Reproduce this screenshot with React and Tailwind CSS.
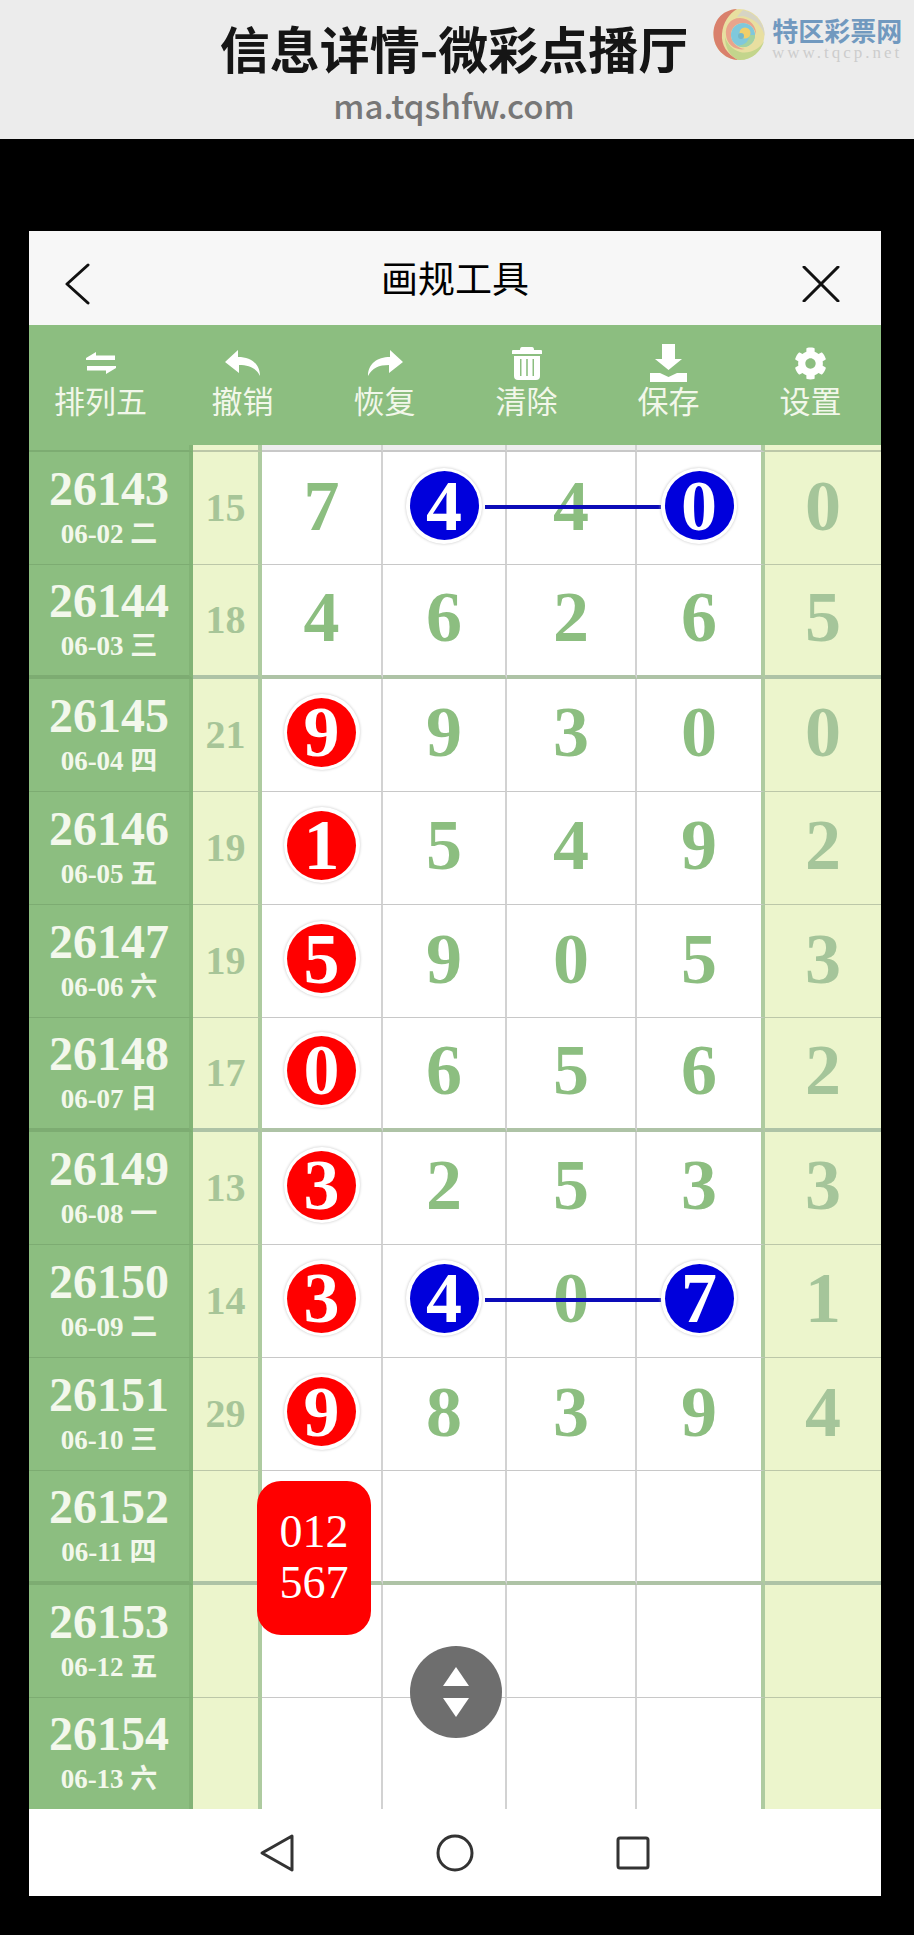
import { FaCog } from "react-icons/fa";

const serif = "font-['Liberation_Serif',serif]";
const cjk = "font-['Noto_Sans_CJK_SC','Noto_Sans',sans-serif]";
const cols = "grid grid-cols-[164px_69px_121px_124px_130px_128px_116px]";

// r / b mark the red and blue balls
const rows = [
  { id: 26143, date: "06-02 二", sum: 15, nums: ["7", "b4", "4", "b0"], last: 0, link: true },
  { id: 26144, date: "06-03 三", sum: 18, nums: ["4", "6", "2", "6"], last: 5, thick: true },
  { id: 26145, date: "06-04 四", sum: 21, nums: ["r9", "9", "3", "0"], last: 0 },
  { id: 26146, date: "06-05 五", sum: 19, nums: ["r1", "5", "4", "9"], last: 2 },
  { id: 26147, date: "06-06 六", sum: 19, nums: ["r5", "9", "0", "5"], last: 3 },
  { id: 26148, date: "06-07 日", sum: 17, nums: ["r0", "6", "5", "6"], last: 2, thick: true },
  { id: 26149, date: "06-08 一", sum: 13, nums: ["r3", "2", "5", "3"], last: 3 },
  { id: 26150, date: "06-09 二", sum: 14, nums: ["r3", "b4", "0", "b7"], last: 1, link: true },
  { id: 26151, date: "06-10 三", sum: 29, nums: ["r9", "8", "3", "9"], last: 4 },
  { id: 26152, date: "06-11 四", nums: ["", "", "", ""], thick: true },
  { id: 26153, date: "06-12 五", nums: ["", "", "", ""] },
  { id: 26154, date: "06-13 六", nums: ["", "", "", ""], end: true },
];

function Ball({ value }) {
  const color = value[0] === "r" ? "bg-[#ff0000]" : "bg-[#0000dc]";
  return (
    <div className="relative z-10 w-[76px] h-[76px] rounded-full bg-white shadow-[0_0_3px_#c4c4c4] flex items-center justify-center">
      <div className={`w-[69px] h-[69px] rounded-full ${color} flex items-center justify-center text-white text-[72px] leading-none font-bold`}>
        {value[1]}
      </div>
    </div>
  );
}

function SwapIcon() {
  return (
    <svg width="30" height="22" viewBox="0 0 30 22" fill="white">
      <path d="M0 6 L10 0 L10 3.5 L29 3.5 L29 8 L0 8 Z" />
      <path d="M30 16 L20 22 L20 18.5 L1 18.5 L1 14 L30 14 Z" />
    </svg>
  );
}

function ReplyIcon({ flip }) {
  return (
    <svg width="36" height="27" viewBox="0 0 36 27" fill="white" className={flip ? "-scale-x-100" : ""}>
      <path d="M0 12 L13 0 V7 C26 7 35 14 35 26 C31 18 24 15 14 15 V23 Z" />
    </svg>
  );
}

function TrashIcon() {
  return (
    <svg width="30" height="33" viewBox="0 0 30 33" fill="white">
      <path d="M10 0 H20 Q22 0 22 3 H29 Q30 3 30 4 V7 H0 V4 Q0 3 1 3 H8 Q8 0 10 0 Z" />
      <path fillRule="evenodd" d="M2 9 H28 V29 Q28 33 24 33 H6 Q2 33 2 29 Z M8 12 V29 H9.5 V12 Z M14.2 12 V29 H15.8 V12 Z M20.5 12 V29 H22 V12 Z" />
    </svg>
  );
}

function DownloadIcon() {
  return (
    <svg width="37" height="38" viewBox="0 0 37 38" fill="white">
      <path d="M12 0 H25 V15 H32 L18.5 26 L5 15 H12 Z" />
      <path d="M0 29 H10 L18.5 33 L27 29 H37 V38 H0 Z" />
    </svg>
  );
}

const tools = [
  { label: "排列五", icon: <SwapIcon /> },
  { label: "撤销", icon: <ReplyIcon /> },
  { label: "恢复", icon: <ReplyIcon flip /> },
  { label: "清除", icon: <TrashIcon /> },
  { label: "保存", icon: <DownloadIcon /> },
  { label: "设置", icon: <FaCog size={33} color="white" /> },
];

function Logo() {
  return (
    <svg width="52" height="53" viewBox="0 0 52 53">
      <circle cx="26" cy="26.5" r="25.5" fill="#e8dfa0" />
      <path d="M24 1 C8 2 0 14 0.5 27 C1 40 11 51 25 52 C14 46 8 37 9 26 C10 14 16 6 24 1 Z" fill="#d9806c" />
      <path d="M25 52 C38 53 48 44 51 33 C46 42 36 46 27 44 C20 42 14 36 12 29 C12 40 17 48 25 52 Z" fill="#c3d58c" />
      <path d="M30 2 C43 5 52 16 51.5 28 C50 20 44 13 36 10 C32 8 28 8 24 9 C26 6 28 4 30 2 Z" fill="#d6d4c4" />
      <path d="M27 10 C17 10 12 18 13 27 C14 37 23 43 32 41 C24 40 18 34 18 27 C18 20 23 15 30 15 C37 15 42 20 43 27 C44 19 37 10 27 10 Z" fill="#e9a48c" />
      <circle cx="30" cy="27" r="12" fill="#7fc8dc" />
      <path d="M42 27 A12 12 0 0 1 24 37.4 C31 38 36 34 36 27 Z" fill="#a4d2a0" />
      <circle cx="32" cy="25" r="5.5" fill="#f0cf6a" />
      <circle cx="28" cy="28" r="3" fill="#76b8c8" />
    </svg>
  );
}

function Row({ row }) {
  const line = row.end ? "" : row.thick ? "border-b-4" : "border-b";
  const soft = row.thick ? "border-b-[#aec3a6]" : "border-b-[#bcc7a8]";
  return (
    <div className={`relative ${cols} ${row.end ? "h-[111.25px]" : "h-[113.25px]"} ${serif} font-bold`}>
      <div className={`flex flex-col items-center justify-center bg-[#8cbe80] border-r-4 border-r-[#82b376] ${line} border-b-[#7dac72] text-[#f3f8ec]`}>
        <div className="text-[48px] leading-[46px] pt-[6px]">{row.id}</div>
        <div className="text-[27px] leading-[44px] font-['Liberation_Serif','Noto_Sans_CJK_SC',serif]">{row.date}</div>
      </div>
      <div className={`flex items-center justify-center bg-[#ecf5cc] border-r-4 border-r-[#aecba0] ${line} ${soft} text-[40px] text-[#a7c598]`}>
        {row.sum}
      </div>
      {row.nums.map((n, i) => (
        <div
          key={i}
          className={`flex items-center justify-center bg-white pb-[5px] ${i === 3 ? "border-r-4 border-r-[#aecba0]" : "border-r-2 border-r-[#d2d2d2]"} ${line} ${row.thick ? "border-b-[#aec3a6]" : "border-b-[#c8c8c8]"} text-[72px] leading-none text-[#8cbe80]`}
        >
          {n[0] === "r" || n[0] === "b" ? <Ball value={n} /> : n}
        </div>
      ))}
      <div className={`flex items-center justify-center bg-[#ecf5cc] pb-[5px] ${line} ${soft} text-[72px] leading-none text-[#a5c59a]`}>
        {row.last}
      </div>
      {row.link && <div className="absolute left-[456px] top-[53px] w-[176px] h-[4px] bg-[#0c0cb8]" />}
    </div>
  );
}

export default function App() {
  return (
    <div className="w-[914px] h-[1935px] bg-black overflow-hidden">
      <div className={`relative h-[139px] bg-[#ececec] flex flex-col items-center pr-[6px] ${cjk}`}>
        <div className="mt-[14px] text-[50px] leading-[66px] font-bold text-[#151515]">信息详情-微彩点播厅</div>
        <div className="mt-[5px] text-[33px] leading-[40px] font-medium text-[#777777]">ma.tqshfw.com</div>
        <div className="absolute left-[713px] top-[8px] flex items-start gap-[7px]">
          <Logo />
          <div className="flex flex-col items-center pt-[8px]">
            <div className="text-[26px] leading-[28px] font-bold text-[#7199bf]">特区彩票网</div>
            <div className="font-['Liberation_Serif',serif] text-[17px] leading-[18px] tracking-[3px] text-[#cdcdcd]">www.tqcp.net</div>
          </div>
        </div>
      </div>

      <div className="relative mt-[92px] ml-[29px] w-[852px] h-[1665px] bg-white overflow-hidden">
        <div className={`relative h-[94px] bg-[#f7f7f7] flex items-center justify-center ${cjk}`}>
          <svg className="absolute left-[36px] top-[32px]" width="25" height="42" viewBox="0 0 25 42" fill="none" stroke="#111" strokeWidth="3" strokeLinecap="round" strokeLinejoin="round">
            <path d="M23 2 L2 21 L23 40" />
          </svg>
          <div className="text-[37px] leading-none text-black -mt-[1px]">画规工具</div>
          <svg className="absolute left-[773px] top-[35px]" width="38" height="36" viewBox="0 0 38 36" fill="none" stroke="#111" strokeWidth="3" strokeLinecap="round">
            <path d="M2 1 L36 35 M36 1 L2 35" />
          </svg>
        </div>

        <div className={`grid grid-cols-6 h-[120px] bg-[#8cbe80] ${cjk}`}>
          {tools.map((t) => (
            <div key={t.label} className="flex flex-col items-center pt-[19px] pl-[1px]">
              <div className="h-[38px] flex items-center justify-center">{t.icon}</div>
              <div className="text-[31px] leading-[36px] text-[#f2f7ea]">{t.label}</div>
            </div>
          ))}
        </div>

        <div className={`${cols} h-[7px]`}>
          <div className="bg-[#8cbe80] border-b-2 border-b-[#7dac72] border-r-4 border-r-[#82b376]" />
          <div className="bg-[#ecf5cc] border-b-2 border-b-[#bcc7a8] border-r-4 border-r-[#aecba0]" />
          <div className="bg-[#eeeeee] border-b-2 border-b-[#c8c8c8] border-r-2 border-r-[#d2d2d2]" />
          <div className="bg-[#eeeeee] border-b-2 border-b-[#c8c8c8] border-r-2 border-r-[#d2d2d2]" />
          <div className="bg-[#eeeeee] border-b-2 border-b-[#c8c8c8] border-r-2 border-r-[#d2d2d2]" />
          <div className="bg-[#eeeeee] border-b-2 border-b-[#c8c8c8] border-r-4 border-r-[#aecba0]" />
          <div className="bg-[#ecf5cc] border-b-2 border-b-[#bcc7a8]" />
        </div>

        {rows.map((row) => (
          <Row key={row.id} row={row} />
        ))}

        <div className="flex items-center justify-center h-[87px] bg-white">
          <svg width="392" height="40" viewBox="0 0 392 40" fill="none" stroke="#333" strokeWidth="3" strokeLinejoin="round">
            <path d="M33 3 L3 20 L33 37 Z" />
            <circle cx="196" cy="20" r="17" />
            <rect x="359" y="5" width="30" height="30" rx="2" />
          </svg>
        </div>

        <div className={`absolute left-[228px] top-[1250px] w-[114px] h-[154px] rounded-[24px] bg-[#ff0000] flex flex-col items-center justify-center pb-[3px] text-white text-[46px] leading-[51px] ${serif}`}>
          <div>012</div>
          <div>567</div>
        </div>

        <div className="absolute left-[381px] top-[1415px] w-[92px] h-[92px] rounded-full bg-[#6e6e6e] flex flex-col items-center justify-center gap-[12px]">
          <div className="w-0 h-0 border-x-[13px] border-x-transparent border-b-[19px] border-b-white" />
          <div className="w-0 h-0 border-x-[13px] border-x-transparent border-t-[19px] border-t-white" />
        </div>
      </div>
    </div>
  );
}
